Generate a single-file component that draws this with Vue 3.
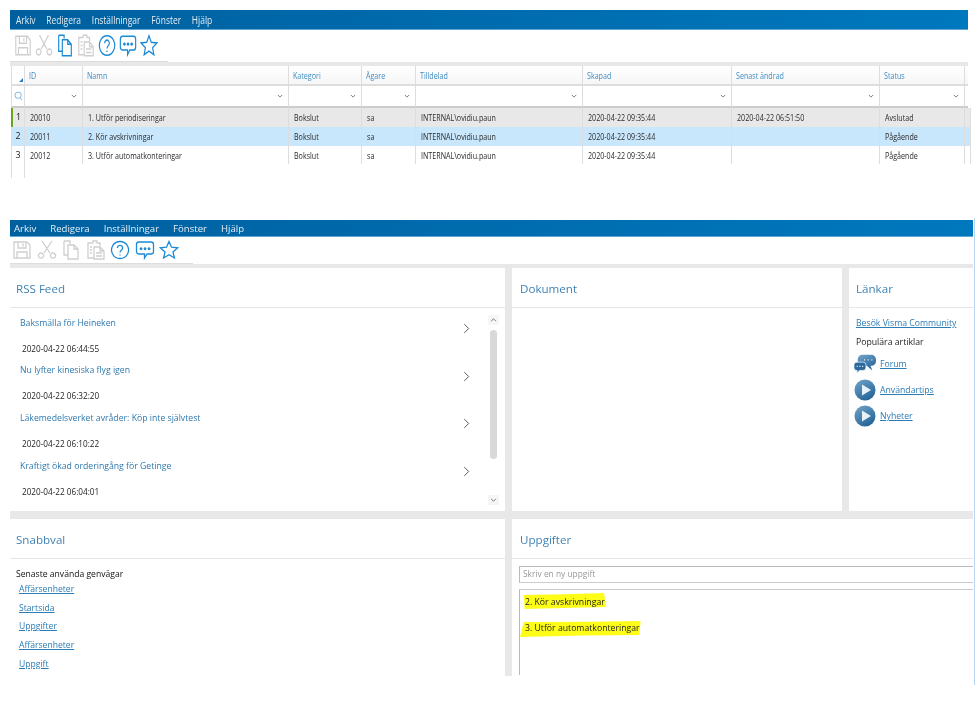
<script setup>
const menu = ['Arkiv', 'Redigera', 'Inställningar', 'Fönster', 'Hjälp']
const tools = [
  { id: 'save', on: false, d: 'M2 2h13l3 3v13H2zM6 2v6h8V2M11 3.500v3M5 18v-6h10v6' },
  { id: 'cut', on: false, d: 'M5 1l8 12M15 1L7 13M4 13a2.600 2.600 0 1 0 .1 0zM16 13a2.600 2.600 0 1 0 .1 0z' },
  { id: 'copy', on: false, d: 'M3 1h6l0 3M3 1v14h4M7 5h6l4 4v10H7zM13 5v4h4' },
  { id: 'paste', on: false, d: 'M7 3H2v15h6M7 3V1h4v2h3v3M8 7h6l4 4v8H8zM14 7v4h4M4 7h2M4 10h2M4 13h2M10 13h6M10 16h6' },
  { id: 'help', on: true, d: 'M10 1.500a8.500 8.500 0 1 0 .1 0zM7.400 8a2.600 2.600 0 1 1 4.200 2c-1 .8-1.600 1.300-1.600 2.600M10 14.400v1.200' },
  { id: 'chat', on: true, d: 'M4 2h12a2.500 2.500 0 0 1 2.500 2.500v7A2.500 2.500 0 0 1 16 14h-4l-2.500 4V14H4a2.500 2.500 0 0 1-2.500-2.500v-7A2.500 2.500 0 0 1 4 2zM6 8a.8.8 0 1 0 .1 0zM10 8a.8.8 0 1 0 .1 0zM14 8a.8.8 0 1 0 .1 0z' },
  { id: 'star', on: true, d: 'M10 1.500l2.500 5.700 6.200.6-4.700 4.100 1.400 6.100L10 14.800 4.600 18l1.400-6.100-4.700-4.100 6.200-.6z' }
]
const cols = ['ID', 'Namn', 'Kategori', 'Ägare', 'Tilldelad', 'Skapad', 'Senast ändrad', 'Status']
const rows = [
  { n: 1, cls: 'done', cells: ['20010', '1. Utför periodiseringar', 'Bokslut', 'sa', 'INTERNAL\\ovidiu.paun', '2020-04-22 09:35:44', '2020-04-22 06:51:50', 'Avslutad'] },
  { n: 2, cls: 'sel', cells: ['20011', '2. Kör avskrivningar', 'Bokslut', 'sa', 'INTERNAL\\ovidiu.paun', '2020-04-22 09:35:44', '', 'Pågående'] },
  { n: 3, cls: '', cells: ['20012', '3. Utför automatkonteringar', 'Bokslut', 'sa', 'INTERNAL\\ovidiu.paun', '2020-04-22 09:35:44', '', 'Pågående'] }
]
const feed = [
  ['Baksmälla för Heineken', '2020-04-22 06:44:55'],
  ['Nu lyfter kinesiska flyg igen', '2020-04-22 06:32:20'],
  ['Läkemedelsverket avråder: Köp inte självtest', '2020-04-22 06:10:22'],
  ['Kraftigt ökad orderingång för Getinge', '2020-04-22 06:04:01']
]
const quick = ['Affärsenheter', 'Startsida', 'Uppgifter', 'Affärsenheter', 'Uppgift']
</script>

<template>
  <div class="page">
    <section class="app top">
      <nav class="menu"><div class="menu-in"><span v-for="m in menu" :key="m">{{ m }}</span></div></nav>
      <div class="toolbar">
        <svg v-for="t in tools" :key="t.id" viewBox="0 0 20 20" preserveAspectRatio="none" :class="['tool', t.on || t.id === 'copy' ? 'on' : '']"><path :d="t.d" /></svg>
      </div>
      <div class="strip"></div>
      <div class="grid">
        <div class="corner"><i></i></div>
        <div v-for="c in cols" :key="c" class="head"><span class="sq">{{ c }}</span></div>
        <div class="end head"></div>
        <div class="corner search">
          <svg viewBox="0 0 12 14"><circle cx="5.500" cy="6" r="4.200" /><path d="M8.500 9.500l2 3" /></svg>
        </div>
        <div v-for="c in cols" :key="c" class="filter">
          <svg viewBox="0 0 8 5"><path d="M1 1l3 3 3-3" /></svg>
        </div>
        <div class="end filter"></div>
        <template v-for="r in rows" :key="r.n">
          <div :class="['num', r.cls]">{{ r.n }}</div>
          <div v-for="(v, i) in r.cells" :key="i" :class="['cell', r.cls]"><span class="sq">{{ v }}</span></div>
          <div :class="['cell end', r.cls]"></div>
        </template>
        <div class="stub"></div>
      </div>
    </section>

    <section class="app bottom">
      <nav class="menu"><div class="menu-in"><span v-for="m in menu" :key="m">{{ m }}</span></div></nav>
      <div class="toolbar">
        <svg v-for="t in tools" :key="t.id" viewBox="0 0 20 20" :class="['tool', t.on ? 'on' : '']"><path :d="t.d" /></svg>
      </div>
      <div class="strip"></div>
      <div class="dash">
        <article class="panel">
          <h2>RSS Feed</h2>
          <div class="rss">
            <div class="feed">
              <div v-for="f in feed" :key="f[0]" class="item">
                <div class="item-text">
                  <a>{{ f[0] }}</a>
                  <time>{{ f[1] }}</time>
                </div>
                <svg class="chev" viewBox="0 0 8 12"><path d="M1.500 1l5 5-5 5" /></svg>
              </div>
            </div>
            <div class="scroll">
              <svg viewBox="0 0 8 5"><path d="M1 4l3-3 3 3" /></svg>
              <div class="thumb"></div>
              <svg viewBox="0 0 8 5"><path d="M1 1l3 3 3-3" /></svg>
            </div>
          </div>
        </article>
        <article class="panel">
          <h2>Dokument</h2>
        </article>
        <article class="panel">
          <h2>Länkar</h2>
          <div class="links">
            <a class="community">Besök Visma Community</a>
            <p>Populära artiklar</p>
            <div class="art">
              <svg viewBox="0 0 24 20">
                <defs>
                  <linearGradient id="ball" x1="0.200" y1="0" x2="0.800" y2="1">
                    <stop offset="0" stop-color="#6c9fc6" />
                    <stop offset="1" stop-color="#1f6095" />
                  </linearGradient>
                </defs>
                <path fill="url(#ball)" d="M9 0h10a5 5 0 0 1 5 5v2a5 5 0 0 1-5 5h-1l2 5-6-5H9a5 5 0 0 1-5-5V5a5 5 0 0 1 5-5z" />
                <path class="bubble2" d="M3 8h7a3 3 0 0 1 3 3v3a3 3 0 0 1-3 3H6l-3 3 .5-3H3a3 3 0 0 1-3-3v-3a3 3 0 0 1 3-3z" />
                <path class="dots" d="M11 5.500h1M15 5.500h1M19 5.500h1M3 12.500h1M6 12.500h1M9 12.500h1" />
              </svg>
              <a>Forum</a>
            </div>
            <div class="art">
              <svg viewBox="0 0 22 22"><circle fill="url(#ball)" cx="11" cy="11" r="10.500" /><path class="play" d="M8 5.500l9 5.500-9 5.500z" /></svg>
              <a>Användartips</a>
            </div>
            <div class="art">
              <svg viewBox="0 0 22 22"><circle fill="url(#ball)" cx="11" cy="11" r="10.500" /><path class="play" d="M8 5.500l9 5.500-9 5.500z" /></svg>
              <a>Nyheter</a>
            </div>
          </div>
        </article>
        <article class="panel">
          <h2>Snabbval</h2>
          <div class="quick">
            <p>Senaste använda genvägar</p>
            <a v-for="(q, i) in quick" :key="i">{{ q }}</a>
          </div>
        </article>
        <article class="panel wide">
          <h2>Uppgifter</h2>
          <div class="tasks">
            <div class="new">Skriv en ny uppgift</div>
            <div class="list">
              <div class="mark m1">2. Kör avskrivningar</div>
              <div class="mark m2">3. Utför automatkonteringar</div>
            </div>
          </div>
        </article>
      </div>
    </section>
    <div class="edge"></div>
  </div>
</template>

<style>
html, body { margin: 0; background: #fff; }
</style>

<style scoped>
.page {
  position: relative;
  width: 977px;
  height: 706px;
  overflow: hidden;
  background: #fff;
  box-sizing: border-box;
  padding: 10px 0 0 10px;
  font-family: "Open Sans", "Liberation Sans", sans-serif;
  color: #222;
  filter: blur(0.4px);
}
p, h2 { margin: 0; font-weight: 400; }
a { color: #2c7cb5; }

.app.top { width: 958px; }
.app.bottom { width: 963px; margin-top: 42px; }

.menu {
  display: flex;
  align-items: center;
  background: linear-gradient(90deg, #00609f, #0078be);
  color: #e4eef6;
  border-bottom: 1px solid #5fa6d2;
}
.menu-in { display: flex; }
.top .menu { height: 19px; padding-left: 6px; }
.top .menu-in { gap: 13.100px; font-size: 10.300px; transform: scaleX(0.82); transform-origin: 0 50%; }
.bottom .menu { height: 16px; padding-left: 4px; }
.bottom .menu-in { gap: 14px; font-size: 9.600px; }

.toolbar { display: flex; align-items: center; border-bottom: 1px solid #ddd; box-sizing: border-box; }
.top .toolbar { height: 32px; width: 158px; gap: 3px; padding-left: 4px; }
.bottom .toolbar { height: 27px; width: 183px; gap: 4.500px; padding-left: 2px; }
.tool { fill: none; stroke: #cfcfcf; stroke-width: 1.300; }
.top .tool { width: 18px; height: 23px; }
.bottom .tool { width: 20px; height: 20px; }
.tool.on { stroke: #1b8ad6; }

.strip { background: #e8e8e8; height: 4px; }

.grid {
  display: grid;
  grid-template-columns: 14px 58px 206px 73px 54px 167px 149px 148px 85px 3px;
  grid-template-rows: 20px 22px 19px 19px 18px 14px;
  margin-left: 1px;
  font-size: 8.800px;
}
.sq { display: inline-block; white-space: nowrap; transform: scaleX(0.81); transform-origin: 0 50%; }
.corner { background: #fff; border-left: 1px solid #ddd; border-right: 1px solid #ddd; border-bottom: 2px solid #ddd; box-sizing: border-box; display: flex; align-items: flex-end; justify-content: flex-end; }
.corner i { width: 0; height: 0; border-left: 4px solid transparent; border-bottom: 4px solid #2f7fc0; margin: 0 1px 2px 0; }
.search { align-items: center; justify-content: center; border-bottom-color: #ccc; }
.search svg { width: 9px; height: 12px; fill: none; stroke: #6fb0dd; stroke-width: 1.200; }
.head { background: linear-gradient(#fff, #f6f6f6); color: #3f8cc4; padding: 4px 0 0 4px; border-right: 1px solid #ddd; border-bottom: 2px solid #ddd; box-sizing: border-box; }
.filter { background: #fff; border-right: 1px solid #ddd; border-bottom: 2px solid #ccc; box-sizing: border-box; display: flex; align-items: center; justify-content: flex-end; padding-right: 5px; }
.filter svg { width: 6px; height: 4px; fill: none; stroke: #555; stroke-width: 1; }
.end { border-right: 0; padding: 0; }
.num { font-size: 8.800px; text-align: center; line-height: 19px; border-right: 1px solid #ddd; border-left: 1px solid #ddd; box-sizing: border-box; background: #fff; }
.cell { padding-left: 5px; line-height: 21.500px; border-right: 1px solid #ddd; box-sizing: border-box; color: #2a2a2a; white-space: nowrap; overflow: hidden; }
.num.done { border-left: 2px solid #6aa51f; background: #e8e8e8; }
.cell.done { background: #e8e8e8; }
.num.sel, .cell.sel { background: #c9e7fc; }
.stub { grid-column: 1; width: 14px; border-right: 1px solid #ddd; border-left: 1px solid #ddd; box-sizing: border-box; }

.dash {
  display: grid;
  grid-template-columns: 495px 330px 124px;
  grid-template-rows: 243px 157px;
  gap: 8px 7px;
  background: #e8e8e8;
  width: 963px;
}
.panel { background: #fff; overflow: hidden; }
.wide { grid-column: span 2; }
h2 {
  height: 40px;
  box-sizing: border-box;
  border-bottom: 1px solid #e6e6e6;
  color: #3f82b4;
  font-size: 11.600px;
  line-height: 42px;
  padding-left: 6px;
}
.panel:nth-child(2) h2, .panel:nth-child(5) h2 { padding-left: 8px; }
.panel:nth-child(3) h2 { padding-left: 7px; }

.rss { display: flex; }
.feed { flex: 1; padding-top: 2px; }
.item { display: flex; align-items: center; height: 47.600px; }
.item-text { flex: 1; padding-left: 10px; }
.item-text a { display: block; font-size: 8.700px; line-height: 20px; color: #2f78ae; }
.item-text time { display: block; font-size: 8.200px; margin: 10px 0 0 2px; line-height: 12px; color: #222; }
.chev { width: 7px; height: 11px; margin-right: 17px; fill: none; stroke: #444; stroke-width: 1; margin-top: -10px; }
.scroll { width: 13px; margin-right: 5px; padding-top: 7px; display: flex; flex-direction: column; align-items: center; }
.scroll svg { width: 7px; height: 4px; fill: none; stroke: #555; stroke-width: 1; flex: none; padding: 3px 2px; background: #f6f6f6; }
.thumb { width: 7px; height: 129px; background: #d8d8d8; border-radius: 4px; margin: 5px 0 36px; }

.links { padding: 9px 0 0 7px; font-size: 8.700px; }
.links a { text-decoration: underline; color: #2c7cb5; }
.community { display: block; line-height: 12px; }
.links p { margin-top: 7px; line-height: 12px; color: #222; }
.art { display: flex; align-items: center; gap: 4px; height: 26px; margin-left: -2px; }
.art:first-of-type { margin-top: 3px; }
.art svg { width: 22px; height: 22px; flex: none; }
.bubble2 { fill: #2c6a9e; stroke: #fff; stroke-width: .7; }
.dots { stroke: #fff; stroke-width: 1.400; fill: none; }
.play { fill: #e8f1f8; }

.quick { padding: 9px 0 0 6px; font-size: 8.600px; color: #111; }
.quick p { line-height: 12px; }
.quick a { display: block; margin-left: 3px; line-height: 18.700px; text-decoration: underline; }

.tasks { padding: 7px 0 0 7px; }
.new { height: 17px; box-sizing: border-box; border: 1px solid #bbb; border-right: 0; border-bottom-color: #ccc; color: #999; font-size: 8.400px; line-height: 13px; padding-left: 3px; }
.list { margin-top: 6px; height: 86px; box-sizing: border-box; border-left: 1px solid #bbb; border-top: 1px solid #ccc; font-size: 8.700px; color: #222; padding-top: 3px; }
.mark { background: #fdfd17; height: 16px; width: max-content; }
.m1 { margin-left: 3px; padding: 0 1px 0 2px; line-height: 18px; clip-path: polygon(1% 12%, 50% 8%, 98% 0, 100% 88%, 60% 92%, 2% 100%); }
.m2 { margin-top: 12px; padding: 0 1px 0 5px; line-height: 14px; clip-path: polygon(3% 6%, 60% 4%, 100% 0, 99% 88%, 50% 90%, 0 100%); }

.edge { position: absolute; left: 974px; top: 218px; width: 1px; height: 467px; background: #b9d4f5; }
</style>
